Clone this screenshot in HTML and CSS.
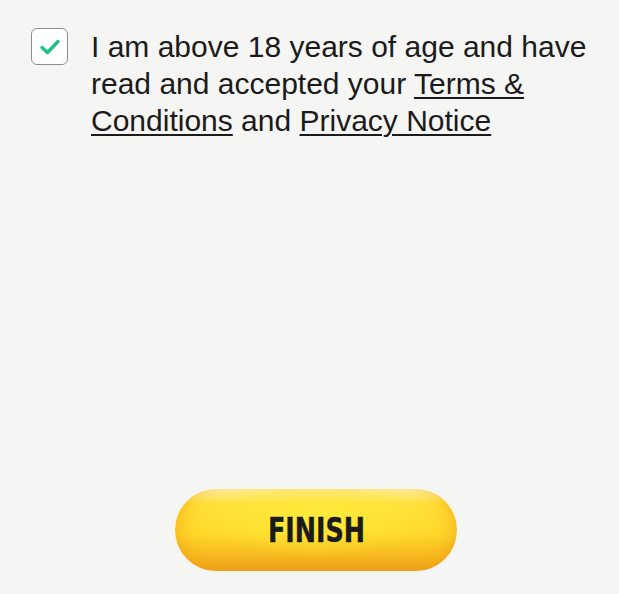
FILE: index.html
```html
<!DOCTYPE html>
<html>
<head>
<meta charset="utf-8">
<link rel="stylesheet" href="styles.css">
</head>
<body>
<div class="page">
  <label class="consent">
    <span class="box">
      <svg width="22" height="22" viewBox="0 0 22 22"><path d="M3 11.5 L8.5 16.5 L19 5.5" fill="none" stroke="#1dbf85" stroke-width="3.4" stroke-linecap="round" stroke-linejoin="round"/></svg>
    </span>
    <span class="text">I am above 18 years of age and have read and accepted your <a href="#">Terms &amp; Conditions</a> and <a href="#">Privacy Notice</a></span>
  </label>
  <div class="spacer"></div>
  <div class="actions">
    <button class="finish"><span class="label">FINISH</span></button>
  </div>
</div>
</body>
</html>
```
FILE: styles.css
```css
html, body { margin: 0; padding: 0; }
body {
  background: #f5f5f3;
  width: 619px;
  height: 594px;
  overflow: hidden;
}
.page {
  height: 594px;
  display: flex;
  flex-direction: column;
  box-sizing: border-box;
  padding: 28px 0 23px 31px;
}
.consent {
  display: flex;
  align-items: flex-start;
  gap: 23px;
}
.box {
  flex: none;
  width: 35px;
  height: 35px;
  border: 1px solid #8e8e8e;
  border-radius: 6px;
  background: #fff;
  display: flex;
  align-items: center;
  justify-content: center;
}
.text {
  font-family: "Liberation Sans", Arial, sans-serif;
  font-size: 30px;
  line-height: 37px;
  color: #1b1b1b;
  margin-top: 0;
  width: 515px;
}
.text a { color: #1b1b1b; text-decoration: underline; text-underline-offset: 3px; text-decoration-thickness: 2px; }
.spacer { flex: 1; }
.actions { display: flex; justify-content: center; padding-right: 18px; }
.finish {
  width: 282px;
  height: 82px;
  border: none;
  border-radius: 41px;
  padding: 0;
  font-family: "DejaVu Sans Condensed", "DejaVu Sans", sans-serif;
  font-weight: bold;
  font-size: 34px;
  color: #1a1a1a;
  background:
    radial-gradient(ellipse 60% 70% at 50% 35%, rgba(255,236,60,0.9), rgba(255,220,40,0) 70%),
    linear-gradient(to bottom, #fff3a8 0%, #ffe03a 18%, #ffd82a 55%, #f5b41e 85%, #ee9f1a 100%);
  box-shadow: inset 14px 0 18px -10px rgba(240,160,20,0.6), inset -14px 0 18px -10px rgba(240,160,20,0.6);
}
.label { display: inline-block; transform: scaleX(0.83); -webkit-text-stroke: 0.4px #1a1a1a; }
```
